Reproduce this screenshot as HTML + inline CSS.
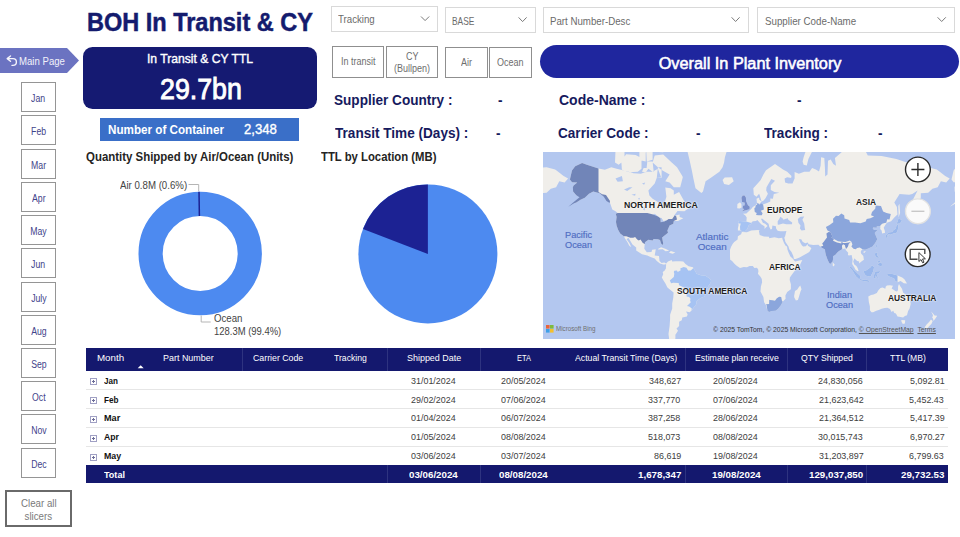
<!DOCTYPE html>
<html><head><meta charset="utf-8">
<style>
*{margin:0;padding:0;box-sizing:border-box}
html,body{width:960px;height:537px;overflow:hidden;background:#fff;font-family:"Liberation Sans",sans-serif}
.a{position:absolute}
.title{left:86.8px;top:8.1px;font-size:25px;font-weight:bold;color:#141b6e;-webkit-text-stroke:0.5px #141b6e;white-space:nowrap;transform:scaleX(0.94);transform-origin:0 0}
.mainpage{left:0;top:48px;width:79px;height:25px;background:#6b73c1;clip-path:polygon(0 0,67px 0,79px 12.5px,67px 25px,0 25px)}
.mp-text{left:19.2px;top:56px;font-size:10px;color:#f2f2fa;white-space:nowrap;transform:scaleX(0.96);transform-origin:0 0}
.mon{left:21px;width:35px;height:30px;border:1px solid #959595;color:#3f438a;font-size:10px;text-align:center;line-height:31.5px;background:#fff}
.mon span{display:inline-block;transform:scaleX(0.87)}
.clear{left:5px;top:490px;width:67px;height:37px;border:2px solid #6a6a6a;color:#7a7a7a;font-size:10.8px;text-align:center;line-height:13px;padding-top:4.5px}
.clear span{display:inline-block;transform:scaleX(0.9)}
.bigbox{left:83px;top:47px;width:234px;height:61.5px;background:#151a72;border-radius:9.5px}
.bb-t{left:147px;top:50.5px;font-size:13.2px;color:#fff;-webkit-text-stroke:0.4px #fff;white-space:nowrap;transform:scaleX(0.92);transform-origin:0 0}
.bb-v{left:160px;top:72.7px;font-size:29px;color:#fff;-webkit-text-stroke:0.9px #fff;white-space:nowrap;transform:scaleX(0.923);transform-origin:0 0}
.noc{left:100px;top:118px;width:199px;height:23px;background:#3a6fc8}
.noc-t{left:108px;top:122.1px;color:#fff;font-size:13px;font-weight:bold;white-space:nowrap;transform:scaleX(0.897);transform-origin:0 0}
.noc-v{left:244px;top:121.2px;color:#fff;font-size:14px;-webkit-text-stroke:0.35px #fff;white-space:nowrap;transform:scaleX(0.94);transform-origin:0 0}
.dd{height:26px;border:1px solid #d9d9d9;background:#fff}
.ddt{color:#6b6b6b;white-space:nowrap;transform-origin:0 0}
.btn{border:1.5px solid #8f8f8f;background:#fff}
.btt{color:#6e6e6e;font-size:10px;white-space:nowrap;transform-origin:0 0}
.pill{left:540px;top:45px;width:419px;height:33px;background:#1f269e;border-radius:17px}
.pill-t{left:658.7px;top:53.9px;color:#fff;font-size:16.3px;-webkit-text-stroke:0.55px #fff;white-space:nowrap;transform:scaleX(1);transform-origin:0 0}
.lab{color:#161a5e;font-size:14px;font-weight:bold;white-space:nowrap;transform:scaleX(0.97);transform-origin:0 0}
.dl{color:#444;font-size:10.5px;white-space:nowrap;transform-origin:0 0}
.th{background:#14186e}
.vsep{width:1px;background:#2e3380}
.hsep{height:1px;background:#e6e6e6}
.tht{color:#fff;font-size:9.5px;white-space:nowrap;transform-origin:0 0}
.td{color:#404040;font-size:9.8px;white-space:nowrap;transform-origin:0 0}
.tdb{color:#111;font-size:9.8px;font-weight:bold;white-space:nowrap;transform-origin:0 0}
.ttb{color:#fff;font-size:9.5px;font-weight:bold;white-space:nowrap;transform-origin:0 0}
.ml{font-size:8.4px;font-weight:bold;color:#1e1e1e;white-space:nowrap;text-shadow:0 0 2px #fff,0 0 2px #fff}
.ol{font-size:9.2px;-webkit-text-stroke:0.15px #4e6cc2;color:#4e6cc2;white-space:nowrap;text-align:center;line-height:10px}
.ctitle{color:#252423;font-size:12px;font-weight:bold;white-space:nowrap;transform:scaleX(0.97);transform-origin:0 0}
</style></head><body>
<div class="a title">BOH In Transit &amp; CY</div>
<div class="a mainpage"></div>
<svg class="a" style="left:4px;top:53px" width="16" height="16"><path d="M6.5,3 L3.2,5.6 L6.5,8.2 M3.4,5.6 H9 A3.4,3.4 0 0 1 9,12.4 H8" fill="none" stroke="#f4f4fb" stroke-width="1.4" stroke-linecap="round" stroke-linejoin="round"/></svg>
<div class="a mp-text">Main Page</div>

<div class="a mon" style="top:82px"><span>Jan</span></div>
<div class="a mon" style="top:115px"><span>Feb</span></div>
<div class="a mon" style="top:149px"><span>Mar</span></div>
<div class="a mon" style="top:182px"><span>Apr</span></div>
<div class="a mon" style="top:215px"><span>May</span></div>
<div class="a mon" style="top:248px"><span>Jun</span></div>
<div class="a mon" style="top:282px"><span>July</span></div>
<div class="a mon" style="top:315px"><span>Aug</span></div>
<div class="a mon" style="top:348px"><span>Sep</span></div>
<div class="a mon" style="top:381px"><span>Oct</span></div>
<div class="a mon" style="top:414px"><span>Nov</span></div>
<div class="a mon" style="top:448px"><span>Dec</span></div>
<div class="a clear"><span>Clear all</span><br><span>slicers</span></div>

<div class="a bigbox"></div>
<div class="a bb-t">In Transit &amp; CY TTL</div>
<div class="a bb-v">29.7bn</div>
<div class="a noc"></div>
<div class="a noc-t">Number of Container</div>
<div class="a noc-v">2,348</div>

<div class="a dd" style="left:331px;top:6px;width:107px"></div>
<div class="a ddt" id="dd1" style="left:338.3px;top:12.8px;font-size:11px;transform:scaleX(0.88)">Tracking</div>
<div class="a dd" style="left:445px;top:7px;width:91px"></div>
<div class="a ddt" id="dd2" style="left:452.4px;top:14.5px;font-size:10.5px;transform:scaleX(0.8)">BASE</div>
<div class="a dd" style="left:543px;top:7px;width:206px"></div>
<div class="a ddt" id="dd3" style="left:550.4px;top:14.5px;font-size:10.5px;transform:scaleX(0.923)">Part Number-Desc</div>
<div class="a dd" style="left:757px;top:7px;width:198px"></div>
<div class="a ddt" id="dd4" style="left:764.5px;top:14.5px;font-size:10.5px;transform:scaleX(0.93)">Supplier Code-Name</div>
<svg class="a" style="left:0;top:0" width="960" height="30"><path d="M421,16.5 L425.1,20.6 L429.2,16.5 M518.6,17.4 L522.6,21.6 L526.6,17.4 M731.6,17.3 L735.6,21.5 L739.6,17.3 M937.6,17.3 L941.7,21.5 L945.8,17.3" fill="none" stroke="#7a7a7a" stroke-width="1"/></svg>

<div class="a btn" style="left:332px;top:46px;width:52px;height:32px"></div>
<div class="a btn" style="left:386px;top:46px;width:52px;height:32px"></div>
<div class="a btn" style="left:445px;top:47px;width:43px;height:31px"></div>
<div class="a btn" style="left:489px;top:47px;width:43px;height:31px"></div>
<div class="a btt" id="b1" style="left:341px;top:56px;transform:scaleX(0.9)">In transit</div>
<div class="a btt" id="b2" style="left:406px;top:50.5px;transform:scaleX(0.9)">CY</div>
<div class="a btt" id="b3" style="left:393.5px;top:62.5px;transform:scaleX(0.9)">(Bullpen)</div>
<div class="a btt" id="b4" style="left:461px;top:56.5px;transform:scaleX(0.9)">Air</div>
<div class="a btt" id="b5" style="left:497px;top:56.5px;transform:scaleX(0.9)">Ocean</div>

<div class="a pill"></div>
<div class="a pill-t">Overall In Plant Inventory</div>

<div class="a lab" style="left:334px;top:91.8px">Supplier Country :</div>
<div class="a lab" style="left:498px;top:91.8px">-</div>
<div class="a lab" style="left:559px;top:91.8px;transform:scaleX(1)">Code-Name :</div>
<div class="a lab" style="left:797px;top:91.8px">-</div>
<div class="a lab" style="left:335px;top:125.3px">Transit Time (Days) :</div>
<div class="a lab" style="left:496px;top:125.3px">-</div>
<div class="a lab" style="left:558px;top:125.3px">Carrier Code :</div>
<div class="a lab" style="left:696px;top:125.3px">-</div>
<div class="a lab" style="left:764px;top:125.3px">Tracking :</div>
<div class="a lab" style="left:878px;top:125.3px">-</div>

<div class="a ctitle" style="left:86px;top:149.9px;transform:scaleX(0.953)">Quantity Shipped by Air/Ocean (Units)</div>
<div class="a ctitle" style="left:321px;top:149.9px;transform:scaleX(0.943)">TTL by Location (MB)</div>


<!-- donut -->
<svg class="a" style="left:110px;top:170px" width="190" height="170" viewBox="0 0 190 170">
<circle cx="90.2" cy="83.5" r="49.6" fill="none" stroke="#4d8af0" stroke-width="24.2"/>
<path d="M89,21.8 L89.4,46" stroke="#1c2293" stroke-width="1.5"/>
<path d="M78.5,14.5 H88.7 V21" fill="none" stroke="#b5b5b5" stroke-width="1"/>
<path d="M91.2,145.5 V152 H100.7" fill="none" stroke="#b5b5b5" stroke-width="1"/>
</svg>
<div class="a dl" style="left:119.5px;top:179px;transform:scaleX(0.92)">Air 0.8M (0.6%)</div>
<div class="a dl" style="left:214px;top:311.5px;transform:scaleX(0.92)">Ocean</div>
<div class="a dl" style="left:214px;top:324.5px;transform:scaleX(0.9)">128.3M (99.4%)</div>
<!-- pie -->
<svg class="a" style="left:350px;top:175px" width="160" height="160" viewBox="0 0 160 160">
<circle cx="77.9" cy="78.9" r="69.5" fill="#4d8af0"/>
<path d="M77.9,78.9 L77.9,9.4 A69.5,69.5 0 0 0 13,54 Z" fill="#1c2293"/>
</svg>
<!-- table -->
<div class="a th" style="left:86.2px;top:348.1px;width:862.1px;height:23px"></div>
<div class="a vsep" style="left:242.3px;top:348.1px;height:23px"></div>
<div class="a vsep" style="left:387px;top:348.1px;height:23px"></div>
<div class="a vsep" style="left:480.2px;top:348.1px;height:23px"></div>
<div class="a vsep" style="left:685.3px;top:348.1px;height:23px"></div>
<div class="a vsep" style="left:787.3px;top:348.1px;height:23px"></div>
<div class="a vsep" style="left:866.2px;top:348.1px;height:23px"></div>
<div class="a tht" style="left:96.70px;top:352.30px;transform:scaleX(1.026)">Month</div>
<div class="a tht" style="left:162.80px;top:352.30px;transform:scaleX(0.941)">Part Number</div>
<div class="a tht" style="left:253.20px;top:352.30px;transform:scaleX(0.924)">Carrier Code</div>
<div class="a tht" style="left:334.30px;top:352.30px;transform:scaleX(0.911)">Tracking</div>
<div class="a tht" style="left:406.70px;top:352.30px;transform:scaleX(0.941)">Shipped Date</div>
<div class="a tht" style="left:516.60px;top:352.30px;transform:scaleX(0.781)">ETA</div>
<div class="a tht" style="left:574.80px;top:352.30px;transform:scaleX(0.918)">Actual Transit Time (Days)</div>
<div class="a tht" style="left:694.60px;top:352.30px;transform:scaleX(0.923)">Estimate plan receive</div>
<div class="a tht" style="left:801.00px;top:352.30px;transform:scaleX(0.911)">QTY Shipped</div>
<div class="a tht" style="left:889.70px;top:352.30px;transform:scaleX(0.899)">TTL (MB)</div>
<svg class="a" style="left:137px;top:364.5px" width="8" height="4"><path d="M0.7,3.3 L3.7,0.3 L6.7,3.3Z" fill="#fff"/></svg>
<div class="a hsep" style="left:86.2px;top:389.2px;width:862.1px"></div>
<svg class="a" style="left:90px;top:378px" width="8" height="8" shape-rendering="crispEdges"><rect x="0.5" y="0.5" width="6" height="6" fill="#fff" stroke="#a0a0c4" stroke-width="1"/><rect x="2" y="3" width="3" height="1" fill="#6c6c98"/><rect x="3" y="2" width="1" height="3" fill="#6c6c98"/></svg>
<div class="a tdb" style="left:103.80px;top:374.93px;transform:scaleX(0.823)">Jan</div>
<div class="a td" style="left:411.00px;top:374.93px;transform:scaleX(0.912)">31/01/2024</div>
<div class="a td" style="left:501.00px;top:374.93px;transform:scaleX(0.912)">20/05/2024</div>
<div class="a td" style="left:649.13px;top:374.93px;transform:scaleX(0.912)">348,627</div>
<div class="a td" style="left:713.30px;top:374.93px;transform:scaleX(0.912)">20/05/2024</div>
<div class="a td" style="left:817.90px;top:374.93px;transform:scaleX(0.912)">24,830,056</div>
<div class="a td" style="left:909.55px;top:374.93px;transform:scaleX(0.912)">5,092.81</div>
<div class="a hsep" style="left:86.2px;top:407.9px;width:862.1px"></div>
<svg class="a" style="left:90px;top:397px" width="8" height="8" shape-rendering="crispEdges"><rect x="0.5" y="0.5" width="6" height="6" fill="#fff" stroke="#a0a0c4" stroke-width="1"/><rect x="2" y="3" width="3" height="1" fill="#6c6c98"/><rect x="3" y="2" width="1" height="3" fill="#6c6c98"/></svg>
<div class="a tdb" style="left:103.80px;top:393.63px;transform:scaleX(0.832)">Feb</div>
<div class="a td" style="left:411.00px;top:393.63px;transform:scaleX(0.912)">29/02/2024</div>
<div class="a td" style="left:501.00px;top:393.63px;transform:scaleX(0.912)">07/06/2024</div>
<div class="a td" style="left:648.21px;top:393.63px;transform:scaleX(0.912)">337,770</div>
<div class="a td" style="left:713.30px;top:393.63px;transform:scaleX(0.912)">07/06/2024</div>
<div class="a td" style="left:818.81px;top:393.63px;transform:scaleX(0.912)">21,623,642</div>
<div class="a td" style="left:908.63px;top:393.63px;transform:scaleX(0.912)">5,452.43</div>
<div class="a hsep" style="left:86.2px;top:426.7px;width:862.1px"></div>
<svg class="a" style="left:90px;top:416px" width="8" height="8" shape-rendering="crispEdges"><rect x="0.5" y="0.5" width="6" height="6" fill="#fff" stroke="#a0a0c4" stroke-width="1"/><rect x="2" y="3" width="3" height="1" fill="#6c6c98"/><rect x="3" y="2" width="1" height="3" fill="#6c6c98"/></svg>
<div class="a tdb" style="left:103.80px;top:412.43px;transform:scaleX(0.931)">Mar</div>
<div class="a td" style="left:411.00px;top:412.43px;transform:scaleX(0.912)">01/04/2024</div>
<div class="a td" style="left:501.00px;top:412.43px;transform:scaleX(0.912)">06/07/2024</div>
<div class="a td" style="left:648.21px;top:412.43px;transform:scaleX(0.912)">387,258</div>
<div class="a td" style="left:713.30px;top:412.43px;transform:scaleX(0.912)">28/06/2024</div>
<div class="a td" style="left:818.81px;top:412.43px;transform:scaleX(0.912)">21,364,512</div>
<div class="a td" style="left:909.55px;top:412.43px;transform:scaleX(0.912)">5,417.39</div>
<div class="a hsep" style="left:86.2px;top:445.6px;width:862.1px"></div>
<svg class="a" style="left:90px;top:435px" width="8" height="8" shape-rendering="crispEdges"><rect x="0.5" y="0.5" width="6" height="6" fill="#fff" stroke="#a0a0c4" stroke-width="1"/><rect x="2" y="3" width="3" height="1" fill="#6c6c98"/><rect x="3" y="2" width="1" height="3" fill="#6c6c98"/></svg>
<div class="a tdb" style="left:103.80px;top:431.33px;transform:scaleX(0.885)">Apr</div>
<div class="a td" style="left:411.00px;top:431.33px;transform:scaleX(0.912)">01/05/2024</div>
<div class="a td" style="left:501.00px;top:431.33px;transform:scaleX(0.912)">08/08/2024</div>
<div class="a td" style="left:648.21px;top:431.33px;transform:scaleX(0.912)">518,073</div>
<div class="a td" style="left:713.30px;top:431.33px;transform:scaleX(0.912)">08/08/2024</div>
<div class="a td" style="left:817.90px;top:431.33px;transform:scaleX(0.912)">30,015,743</div>
<div class="a td" style="left:909.55px;top:431.33px;transform:scaleX(0.912)">6,970.27</div>
<div class="a hsep" style="left:86.2px;top:464.5px;width:862.1px"></div>
<svg class="a" style="left:90px;top:454px" width="8" height="8" shape-rendering="crispEdges"><rect x="0.5" y="0.5" width="6" height="6" fill="#fff" stroke="#a0a0c4" stroke-width="1"/><rect x="2" y="3" width="3" height="1" fill="#6c6c98"/><rect x="3" y="2" width="1" height="3" fill="#6c6c98"/></svg>
<div class="a tdb" style="left:103.80px;top:450.23px;transform:scaleX(0.903)">May</div>
<div class="a td" style="left:411.00px;top:450.23px;transform:scaleX(0.912)">03/06/2024</div>
<div class="a td" style="left:501.00px;top:450.23px;transform:scaleX(0.912)">03/07/2024</div>
<div class="a td" style="left:654.09px;top:450.23px;transform:scaleX(0.912)">86,619</div>
<div class="a td" style="left:713.30px;top:450.23px;transform:scaleX(0.912)">19/08/2024</div>
<div class="a td" style="left:818.81px;top:450.23px;transform:scaleX(0.912)">31,203,897</div>
<div class="a td" style="left:908.63px;top:450.23px;transform:scaleX(0.912)">6,799.63</div>
<div class="a th" style="left:86.2px;top:465.2px;width:862.1px;height:17.8px"></div>
<div class="a vsep" style="left:387px;top:465.2px;height:17.8px"></div>
<div class="a vsep" style="left:480.2px;top:465.2px;height:17.8px"></div>
<div class="a vsep" style="left:685.3px;top:465.2px;height:17.8px"></div>
<div class="a vsep" style="left:787.3px;top:465.2px;height:17.8px"></div>
<div class="a vsep" style="left:866.2px;top:465.2px;height:17.8px"></div>
<div class="a ttb" style="left:104.00px;top:469.10px;transform:scaleX(0.951)">Total</div>
<div class="a ttb" style="left:408.85px;top:469.10px;transform:scaleX(1.026)">03/06/2024</div>
<div class="a ttb" style="left:498.75px;top:469.10px;transform:scaleX(1.026)">08/08/2024</div>
<div class="a ttb" style="left:637.94px;top:469.10px;transform:scaleX(1.026)">1,678,347</div>
<div class="a ttb" style="left:711.75px;top:469.10px;transform:scaleX(1.026)">19/08/2024</div>
<div class="a ttb" style="left:809.21px;top:469.10px;transform:scaleX(1.026)">129,037,850</div>
<div class="a ttb" style="left:900.84px;top:469.10px;transform:scaleX(1.026)">29,732.53</div>

<!--MAP-->
<svg class="a" style="left:543px;top:152px" width="412" height="187" viewBox="0 0 412 187">
<rect width="412" height="187" fill="#b3c7ef"/>
<path d="M55.5,16.5L61.9,17.7L68.3,15.3L73.6,16.8L83.1,18.9L90.5,21.2L97.9,21.7L103.2,19.7L105.4,16.8L109.6,19.7L114.9,16.8L118.1,25.3L113.8,25.8L111.7,31.6L105.4,38.5L106.4,43.4L109.6,46.7L114.9,50.0L117.8,54.3L120.2,57.1L121.3,51.5L123.4,44.8L122.3,35.6L127.6,36.3L130.8,38.5L130.8,42.7L136.1,40.0L139.3,45.8L141.4,49.6L145.6,54.1L146.0,55.9L141.4,59.3L134.5,58.9L130.8,64.0L136.6,62.5L136.6,65.1L140.3,66.3L135.0,69.0L130.8,69.0L130.3,71.8L126.6,73.6L124.4,78.4L125.0,80.7L119.1,85.4L120.2,91.5L119.7,93.0L118.1,91.5L117.0,87.9L114.9,87.3L110.7,87.0L109.6,88.5L105.4,87.7L101.9,90.3L101.6,93.2L101.3,96.7L103.8,100.3L108.5,100.1L109.1,97.8L112.8,97.3L111.7,103.4L116.0,104.0L116.5,108.9L118.6,111.0L121.3,110.5L123.1,111.6L122.3,112.6L120.2,112.6L117.0,111.6L113.8,108.9L111.7,106.4L107.5,105.1L104.3,103.4L99.0,102.3L93.2,98.4L93.2,95.6L89.5,92.6L85.4,85.7L83.6,87.3L86.3,90.9L88.4,95.3L86.3,93.8L84.2,89.7L82.0,86.6L80.9,84.2L77.2,81.6L75.1,77.7L73.6,73.6L73.0,70.0L73.6,65.1L72.8,61.8L74.6,60.9L72.5,59.3L69.3,57.6L67.2,51.5L64.0,46.7L59.8,43.8L56.6,41.3L50.2,39.6L46.0,41.7L41.8,45.8L37.5,47.7L33.3,50.5L31.2,51.5L37.5,44.8L33.3,43.2L30.1,39.6L30.1,35.2L30.6,33.5L34.3,30.4L29.0,30.2L26.9,27.6L29.0,18.6L32.2,14.3L39.1,11.1L43.9,12.7ZM139.8,25.3L137.2,35.2L130.8,35.2L126.6,30.4L122.3,29.2L126.6,22.6L119.1,18.3L114.9,15.3L109.6,10.4L111.7,3.4L120.2,2.6L128.7,10.4L134.0,15.3L139.3,23.9ZM78.9,17.7L86.3,20.3L94.8,19.7L98.5,16.8L98.5,5.9L92.6,3.0L83.1,2.3L78.3,9.4ZM72.0,10.4L75.7,12.7L81.5,8.1L81.5,-1.7L72.5,-1.7ZM107.5,-0.5L120.2,0.3L122.3,-6.7L104.3,-11.2L99.0,-6.7ZM79.9,-4.6L93.7,-2.5L102.2,1.5L105.4,-3.3L99.0,-11.2L83.1,-11.2ZM103.8,9.4L109.6,7.7L109.6,-1.7L103.2,-1.7ZM96.4,8.1L102.7,9.4L102.7,-1.7L96.4,-1.7ZM99.0,19.7L103.2,20.3L103.8,15.9L100.6,15.9ZM103.2,19.7L110.7,19.7L109.6,9.4L104.3,9.4ZM113.8,25.8L118.6,25.8L118.6,15.3L114.9,15.3ZM127.6,-16.1L135.0,-6.7L143.5,-4.6L146.7,8.7L148.8,18.3L150.4,26.6L152.5,36.3L158.4,41.1L160.0,39.6L162.6,29.2L167.9,25.8L176.4,19.7L179.6,15.3L181.1,10.4L181.9,5.2L184.3,-2.5L185.9,-16.1L173.2,-27.3L141.4,-27.3ZM179.6,27.9L181.7,25.6L189.1,25.3L190.7,29.2L185.9,33.1L181.1,32.1ZM123.1,111.6L125.0,109.4L128.7,108.0L129.2,109.4L132.9,109.3L137.2,109.2L140.3,109.4L142.5,112.1L145.6,114.2L149.9,115.3L152.0,118.7L153.6,121.7L157.8,123.2L162.6,123.8L165.8,125.9L167.9,128.0L167.9,130.2L165.8,133.4L163.7,136.7L163.1,140.0L161.5,144.5L157.8,145.9L153.6,149.1L153.4,152.1L150.9,155.2L148.8,158.3L146.7,160.2L143.0,159.6L144.6,162.2L144.0,164.5L139.3,165.5L138.8,168.3L136.1,169.7L136.1,174.1L133.5,176.4L135.0,178.7L132.4,182.8L132.4,185.8L131.9,190.7L126.6,190.7L125.5,181.9L126.6,174.1L127.1,166.9L127.1,162.8L129.2,156.4L129.2,151.5L130.3,145.6L130.6,140.5L128.7,138.9L124.4,135.6L122.3,131.2L120.2,128.0L118.8,125.4L120.2,122.2L119.7,120.1L121.5,118.7L122.9,116.4L123.1,113.2ZM194.9,78.4L195.6,78.4L198.1,78.6L199.2,79.7L202.7,78.8L204.5,76.7L205.0,75.0L206.0,72.9L208.5,71.8L208.3,70.8L209.8,69.3L213.0,68.9L214.3,68.0L216.1,70.0L218.2,72.2L221.5,74.3L221.6,77.0L222.6,75.8L224.6,74.0L222.2,71.8L219.8,70.8L218.0,66.8L219.5,66.8L221.5,68.6L225.6,71.8L226.2,74.8L227.6,77.4L229.0,77.0L229.4,73.6L232.9,74.3L233.1,76.6L234.7,78.8L237.3,79.3L241.0,79.3L243.4,78.9L243.1,80.3L242.1,84.2L241.3,85.7L242.0,87.9L242.3,89.7L245.5,94.4L246.3,97.3L248.5,100.1L250.3,104.0L250.9,107.0L252.7,106.9L256.6,105.6L260.1,103.6L263.3,101.8L266.3,100.1L268.4,96.2L267.0,94.9L264.9,93.8L264.7,92.1L262.8,94.2L260.1,94.4L258.8,93.2L257.5,90.9L255.9,87.3L258.2,87.3L259.6,89.8L262.2,91.2L264.7,90.6L265.7,92.3L270.3,93.0L275.5,92.8L277.3,94.7L279.3,96.1L282.0,97.5L282.2,100.1L282.9,102.9L284.3,106.9L285.9,110.5L287.1,112.0L289.6,109.6L290.1,106.7L290.0,104.3L292.1,102.9L295.1,99.8L297.2,98.2L299.0,97.2L300.9,96.7L302.3,96.5L302.9,98.2L305.2,100.7L304.9,102.9L306.0,103.6L308.6,102.9L309.6,107.8L309.4,109.4L309.2,111.9L311.3,115.3L312.4,117.6L314.7,119.2L315.6,119.0L314.6,116.1L313.4,114.0L311.3,112.6L310.2,109.4L311.5,106.2L312.0,107.0L314.2,108.9L316.1,109.4L316.1,111.5L318.4,109.4L320.9,107.8L320.3,104.0L317.9,101.2L317.9,99.0L319.5,97.3L322.1,97.8L325.3,96.4L329.5,94.4L332.2,90.9L334.3,87.3L333.3,84.8L331.7,81.0L332.7,79.7L334.9,77.8L331.1,78.1L329.8,76.6L330.1,75.4L333.8,75.7L333.8,74.3L337.5,74.3L337.2,77.0L338.6,78.4L339.1,81.6L342.1,80.7L341.7,78.4L340.7,75.7L342.3,72.9L343.9,70.8L348.1,69.3L351.3,65.6L354.5,62.5L353.9,55.0L351.3,50.5L356.6,42.1L366.1,42.7L369.3,42.1L374.6,38.5L370.4,46.7L370.9,57.6L376.7,48.7L377.8,45.4L377.8,41.3L385.2,40.7L389.4,36.7L394.7,35.2L397.9,29.2L403.2,30.4L406.7,26.6L402.2,23.9L395.8,18.9L393.7,17.4L385.2,15.3L374.6,16.2L364.0,10.4L353.4,7.0L338.6,4.1L324.8,3.4L315.2,-14.6L305.7,-6.7L297.2,1.5L291.9,5.9L293.0,13.7L290.3,12.1L287.7,7.4L285.0,8.7L284.5,22.6L282.2,24.5L281.9,15.3L281.3,5.9L278.1,5.2L277.6,13.7L276.0,19.5L272.8,17.4L269.1,15.9L266.5,19.7L261.2,19.7L255.9,21.7L251.6,20.0L251.6,26.6L245.3,30.4L247.4,29.2L248.5,23.9L244.2,19.7L240.0,17.4L236.8,15.3L232.0,12.1L227.3,15.3L223.0,18.3L220.4,22.6L217.7,27.9L213.5,32.8L210.3,36.3L210.8,42.7L213.5,44.8L216.1,41.7L216.7,43.2L218.6,49.6L216.4,47.7L216.1,45.4L213.5,46.7L214.0,51.5L212.4,53.3L209.8,55.0L208.2,57.1L206.6,58.4L203.4,61.4L200.0,61.8L202.4,63.6L203.7,65.6L203.4,69.5L196.5,69.0L195.1,70.0L195.6,72.9L194.9,76.3ZM187.0,97.8L187.0,104.9L187.2,107.8L189.1,109.1L191.2,111.6L193.3,113.4L197.0,115.9L200.8,115.1L203.9,115.3L206.6,114.0L209.8,113.9L211.4,116.0L214.0,115.8L215.2,117.4L215.4,119.5L214.9,121.7L217.5,124.8L218.8,127.0L219.1,130.2L217.9,134.5L217.5,139.4L220.4,145.1L221.1,150.3L223.0,153.3L224.5,158.9L226.2,160.0L228.9,158.9L232.6,158.7L235.2,156.7L237.9,153.3L239.7,149.7L242.6,146.8L242.4,143.4L244.2,140.0L247.9,137.2L247.9,132.3L246.7,128.0L246.9,125.4L249.0,122.4L251.6,119.0L255.9,115.3L259.3,108.0L256.4,108.6L252.2,109.5L250.8,108.3L250.4,107.3L247.4,104.5L245.8,101.0L244.5,97.8L244.0,94.4L242.6,93.8L241.0,90.9L240.5,89.7L239.5,87.3L239.2,85.8L235.7,86.2L231.5,85.3L226.2,86.3L226.0,84.8L220.9,84.4L216.7,82.9L215.9,79.0L216.8,78.4L215.1,78.0L208.2,78.6L203.9,80.3L198.9,79.9L198.1,82.3L194.9,84.2L194.6,87.6L191.2,90.0L189.6,92.1L188.0,95.0ZM257.3,133.4L258.5,137.2L257.5,139.4L255.9,145.1L254.9,147.9L252.9,148.6L251.3,145.6L251.1,143.9L252.0,138.9L254.3,137.4L255.9,135.0ZM325.3,144.5L325.8,149.7L326.9,154.6L326.9,158.3L328.5,160.2L330.1,160.2L333.3,158.7L336.4,157.7L338.6,156.8L341.7,156.0L344.4,155.8L347.0,157.0L348.6,160.0L350.2,158.7L351.3,161.0L352.9,161.5L354.5,164.6L357.6,164.9L360.1,165.5L361.9,163.9L364.0,163.2L365.1,158.9L366.6,156.4L367.7,152.1L367.2,148.0L364.8,145.1L362.9,142.8L360.1,140.5L359.0,136.7L357.1,133.9L356.0,132.0L355.1,134.3L355.0,138.3L353.9,139.5L352.3,138.9L350.2,137.6L348.6,136.5L350.0,133.7L347.0,133.3L343.9,133.6L342.8,134.5L342.3,136.7L339.6,135.6L337.5,136.1L335.4,138.3L333.8,141.1L330.6,142.6L328.0,143.1L325.8,144.3ZM358.3,168.0L362.2,168.2L361.9,171.4L359.8,172.0L358.5,169.7ZM388.1,159.6L390.0,161.5L391.6,163.6L394.2,163.8L392.6,166.2L390.5,169.0L390.0,166.6L389.2,165.8L390.0,163.2ZM388.0,167.6L389.7,169.0L388.4,171.9L386.3,174.1L384.1,176.5L381.5,175.6L383.6,172.6L386.3,169.7ZM343.9,122.2L347.0,121.4L350.2,122.2L354.5,123.4L359.2,125.5L361.4,127.2L364.0,131.5L360.8,131.2L357.6,129.1L354.5,130.3L352.3,129.1L351.1,126.4L348.1,125.2L345.5,124.3ZM320.5,119.0L321.6,122.2L323.2,123.8L326.4,124.6L328.0,124.3L328.5,122.7L330.1,119.5L331.1,115.3L329.0,113.2L327.3,115.4L324.8,117.2L322.7,118.7ZM306.0,114.7L308.4,115.1L311.5,118.5L314.9,121.7L317.4,123.9L317.1,126.8L315.8,126.9L313.1,124.6L311.3,121.7L309.6,118.8ZM316.5,127.8L317.4,126.9L320.0,127.7L322.7,127.5L326.4,128.8L326.3,129.9L321.6,129.2L317.9,128.5ZM331.1,126.4L332.7,126.4L332.5,123.2L333.8,125.4L335.6,126.2L334.3,124.0L333.6,121.7L335.4,121.6L337.5,119.0L332.7,119.5L331.9,120.6L330.9,123.6ZM332.2,100.7L334.6,100.7L334.3,103.4L336.4,105.8L333.8,105.8L332.7,105.1L332.0,102.9ZM334.3,113.2L335.9,111.3L338.6,110.5L339.1,113.2L338.0,114.4L336.4,113.7ZM334.3,110.0L336.4,108.3L338.0,108.9L336.4,110.2L335.4,110.8ZM343.8,82.3L345.5,80.5L349.2,80.1L350.2,78.4L352.9,76.6L353.4,73.6L355.0,72.5L355.5,75.0L354.2,79.7L353.2,81.0L350.2,81.5L348.3,82.5L346.0,82.0L344.4,82.9ZM353.4,72.2L354.5,69.8L355.5,66.5L359.0,68.1L357.1,71.5L354.5,71.8ZM342.5,83.3L344.4,82.6L344.7,85.4L343.3,85.9ZM345.5,83.5L347.7,82.3L347.6,83.1L346.0,83.9ZM332.3,95.6L333.3,93.0L334.3,93.2L333.0,96.7ZM289.6,110.2L291.7,112.6L290.9,114.2L289.8,114.0ZM199.0,59.3L206.5,57.2L206.8,54.7L205.0,53.3L203.1,49.0L202.9,45.4L201.6,43.6L199.7,43.6L198.4,45.8L199.1,50.0L201.8,50.7L201.5,53.4L200.1,53.6L199.5,56.4L201.3,56.9ZM198.6,55.5L198.4,52.0L197.0,50.2L194.4,52.0L194.2,56.2L196.5,56.6ZM114.9,96.9L118.1,95.3L122.9,96.9L126.3,98.7L122.6,99.2L119.7,97.2L115.4,97.5ZM126.0,100.8L127.8,99.1L132.4,100.5L129.7,101.7ZM260.6,12.7L263.8,13.4L265.4,7.0L270.7,-3.7L278.1,-10.3L268.6,-8.9L263.3,-2.5L260.6,5.2L259.6,9.4ZM355.5,65.6L357.1,60.9L356.4,51.8L355.3,54.1L355.5,60.9ZM217.7,-16.1L226.2,-11.2L231.5,-16.1L224.1,-27.3L215.6,-24.3ZM320.1,99.9L322.1,98.9L322.7,99.4L321.2,101.0ZM-186.7,78.4L-186.0,78.4L-183.5,78.6L-182.4,79.7L-178.9,78.8L-177.1,76.7L-176.6,75.0L-175.6,72.9L-173.1,71.8L-173.3,70.8L-171.8,69.3L-168.7,68.9L-167.3,68.0L-165.5,70.0L-163.4,72.2L-160.1,74.3L-160.0,77.0L-159.0,75.8L-157.0,74.0L-159.4,71.8L-161.8,70.8L-163.6,66.8L-162.1,66.8L-160.1,68.6L-156.0,71.8L-155.4,74.8L-154.0,77.4L-152.6,77.0L-152.2,73.6L-148.7,74.3L-148.5,76.6L-146.9,78.8L-144.3,79.3L-140.6,79.3L-138.2,78.9L-138.5,80.3L-139.5,84.2L-140.3,85.7L-139.6,87.9L-139.3,89.7L-136.1,94.4L-135.3,97.3L-133.1,100.1L-131.3,104.0L-130.7,107.0L-128.9,106.9L-125.0,105.6L-121.5,103.6L-118.3,101.8L-115.3,100.1L-113.2,96.2L-114.6,94.9L-116.7,93.8L-116.9,92.1L-118.8,94.2L-121.5,94.4L-122.8,93.2L-124.1,90.9L-125.7,87.3L-123.4,87.3L-122.0,89.8L-119.4,91.2L-116.9,90.6L-115.9,92.3L-111.3,93.0L-106.1,92.8L-104.3,94.7L-102.3,96.1L-99.6,97.5L-99.4,100.1L-98.7,102.9L-97.3,106.9L-95.7,110.5L-94.4,112.0L-92.0,109.6L-91.5,106.7L-91.6,104.3L-89.5,102.9L-86.5,99.8L-84.4,98.2L-82.6,97.2L-80.7,96.7L-79.3,96.5L-78.7,98.2L-76.4,100.7L-76.7,102.9L-75.6,103.6L-73.0,102.9L-72.0,107.8L-72.2,109.4L-72.4,111.9L-70.3,115.3L-69.2,117.6L-66.9,119.2L-66.0,119.0L-67.0,116.1L-68.2,114.0L-70.3,112.6L-71.4,109.4L-70.1,106.2L-69.6,107.0L-67.4,108.9L-65.5,109.4L-65.5,111.5L-63.2,109.4L-60.7,107.8L-61.3,104.0L-63.7,101.2L-63.7,99.0L-62.1,97.3L-59.5,97.8L-56.3,96.4L-52.1,94.4L-49.4,90.9L-47.3,87.3L-48.3,84.8L-49.9,81.0L-48.9,79.7L-46.8,77.8L-50.5,78.1L-51.8,76.6L-51.5,75.4L-47.8,75.7L-47.8,74.3L-44.1,74.3L-44.4,77.0L-43.0,78.4L-42.5,81.6L-39.5,80.7L-39.9,78.4L-40.9,75.7L-39.3,72.9L-37.7,70.8L-33.5,69.3L-30.3,65.6L-27.1,62.5L-27.7,55.0L-30.3,50.5L-25.0,42.1L-15.5,42.7L-12.3,42.1L-7.0,38.5L-11.2,46.7L-10.7,57.6L-4.9,48.7L-3.8,45.4L-3.8,41.3L3.6,40.7L7.8,36.7L13.1,35.2L16.3,29.2L21.6,30.4L25.1,26.6L20.6,23.9L14.2,18.9L12.1,17.4L3.6,15.3L-7.0,16.2L-17.6,10.4L-28.2,7.0L-43.0,4.1L-56.8,3.4L-66.4,-14.6L-75.9,-6.7L-84.4,1.5L-89.7,5.9L-88.6,13.7L-91.3,12.1L-93.9,7.4L-96.6,8.7L-97.1,22.6L-99.4,24.5L-99.8,15.3L-100.3,5.9L-103.5,5.2L-104.0,13.7L-105.6,19.5L-108.8,17.4L-112.5,15.9L-115.1,19.7L-120.4,19.7L-125.7,21.7L-130.0,20.0L-130.0,26.6L-136.3,30.4L-134.2,29.2L-133.1,23.9L-137.4,19.7L-141.6,17.4L-144.8,15.3L-149.6,12.1L-154.3,15.3L-158.6,18.3L-161.2,22.6L-163.9,27.9L-168.1,32.8L-171.3,36.3L-170.8,42.7L-168.1,44.8L-165.5,41.7L-164.9,43.2L-163.0,49.6L-165.2,47.7L-165.5,45.4L-168.1,46.7L-167.6,51.5L-169.2,53.3L-171.8,55.0L-173.4,57.1L-175.0,58.4L-178.2,61.4L-181.6,61.8L-179.2,63.6L-177.9,65.6L-178.2,69.5L-185.1,69.0L-186.5,70.0L-186.0,72.9L-186.7,76.3ZM437.1,16.5L443.5,17.7L449.9,15.3L455.2,16.8L464.7,18.9L472.1,21.2L479.5,21.7L484.8,19.7L487.0,16.8L491.2,19.7L496.5,16.8L499.7,25.3L495.4,25.8L493.3,31.6L487.0,38.5L488.0,43.4L491.2,46.7L496.5,50.0L499.4,54.3L501.8,57.1L502.9,51.5L505.0,44.8L503.9,35.6L509.2,36.3L512.4,38.5L512.4,42.7L517.7,40.0L520.9,45.8L523.0,49.6L527.2,54.1L527.6,55.9L523.0,59.3L516.1,58.9L512.4,64.0L518.2,62.5L518.2,65.1L521.9,66.3L516.6,69.0L512.4,69.0L511.9,71.8L508.2,73.6L506.0,78.4L506.6,80.7L500.7,85.4L501.8,91.5L501.3,93.0L499.7,91.5L498.6,87.9L496.5,87.3L492.3,87.0L491.2,88.5L487.0,87.7L483.5,90.3L483.2,93.2L482.9,96.7L485.4,100.3L490.1,100.1L490.7,97.8L494.4,97.3L493.3,103.4L497.6,104.0L498.1,108.9L500.2,111.0L502.9,110.5L504.7,111.6L503.9,112.6L501.8,112.6L498.6,111.6L495.4,108.9L493.3,106.4L489.1,105.1L485.9,103.4L480.6,102.3L474.8,98.4L474.8,95.6L471.1,92.6L467.0,85.7L465.2,87.3L467.9,90.9L470.0,95.3L467.9,93.8L465.8,89.7L463.6,86.6L462.5,84.2L458.8,81.6L456.8,77.7L455.2,73.6L454.6,70.0L455.2,65.1L454.4,61.8L456.2,60.9L454.1,59.3L450.9,57.6L448.8,51.5L445.6,46.7L441.4,43.8L438.2,41.3L431.8,39.6L427.6,41.7L423.4,45.8L419.1,47.7L414.9,50.5L412.8,51.5L419.1,44.8L414.9,43.2L411.7,39.6L411.7,35.2L412.2,33.5L415.9,30.4L410.6,30.2L408.5,27.6L410.6,18.6L413.8,14.3L420.7,11.1L425.5,12.7ZM437.1,16.5L437.1,40.0L440.9,42.3L444.6,43.0L448.6,48.9L448.3,50.9L445.1,49.0L442.4,44.8L438.2,41.3L431.8,39.6L427.6,41.7L423.4,45.8L419.1,47.7L414.9,50.5L412.2,51.6L406.9,54.8L411.2,50.9L418.1,45.2L414.9,43.2L411.7,39.6L411.5,35.2L412.2,33.5L415.9,30.4L410.6,30.2L408.5,27.6L410.6,18.6L413.8,14.3L420.7,11.1L425.5,12.7Z" fill="#f0eeea"/>
<path d="M216.4,52.0L217.9,52.0L219.8,52.5L224.1,50.9L227.3,49.6L227.3,46.4L229.9,46.7L230.8,41.9L236.3,40.7L231.5,40.0L227.8,38.1L227.8,33.3L232.0,28.7L228.3,27.1L223.5,35.2L223.2,38.5L224.9,41.7L222.5,46.2L220.4,48.7L218.6,49.6ZM234.7,72.6L235.7,72.8L240.0,71.5L243.2,72.2L249.0,72.2L249.2,70.5L245.3,67.8L244.8,66.3L242.1,67.1L240.5,67.8L239.5,66.3L237.3,64.8L236.4,66.8L234.7,69.3ZM254.8,67.1L257.5,64.8L261.2,64.4L259.4,67.8L261.2,71.5L261.7,75.7L262.2,78.0L258.5,78.4L256.9,76.5L257.5,73.6L255.4,70.8ZM241.6,26.6L244.2,25.3L248.5,26.1L251.6,26.6L249.5,31.6L245.3,31.6L242.1,30.4ZM107.5,64.4L111.7,61.7L115.4,64.8L112.8,66.3L111.9,71.5L113.3,71.5L115.1,65.9L117.5,66.6L117.7,70.2L121.3,69.6L123.9,68.3L120.4,68.9L118.6,65.9L116.0,65.6L111.7,64.8ZM72.5,26.6L78.9,23.9L79.9,29.2L74.6,29.7ZM81.0,37.4L86.3,35.2L89.5,35.2L84.2,38.9ZM100.1,57.6L102.7,52.4L101.6,58.4ZM88.4,42.7L92.6,41.7L92.1,43.8ZM94.8,46.7L96.9,45.8L96.4,47.7ZM99.0,31.6L102.2,30.4L101.1,32.8Z" fill="#b3c7ef"/>
<path d="M72.8,61.8L74.6,60.9L104.3,60.9L110.1,62.5L115.4,64.8L117.5,66.6L117.7,70.2L121.3,69.6L123.9,68.3L125.6,67.1L129.2,67.1L131.6,63.4L133.1,64.0L134.0,67.4L130.8,69.0L130.3,71.8L126.6,73.6L124.4,78.4L125.0,80.7L119.1,85.4L120.2,91.5L119.7,93.0L118.1,91.5L117.0,87.9L114.9,87.3L110.7,87.0L109.6,88.5L105.4,87.7L101.9,90.3L102.0,92.1L99.8,91.1L97.5,87.5L95.8,88.5L94.2,87.6L92.1,85.0L90.3,85.7L87.3,85.7L83.3,84.2L80.9,84.2L77.2,81.6L75.1,77.7L73.6,73.6L73.0,70.0L73.6,65.1ZM55.5,16.5L55.5,40.0L59.2,42.3L63.0,43.0L67.0,48.9L66.7,50.9L63.5,49.0L60.8,44.8L56.6,41.3L50.2,39.6L46.0,41.7L41.8,45.8L37.5,47.7L33.3,50.5L30.6,51.6L25.3,54.8L29.6,50.9L36.5,45.2L33.3,43.2L30.1,39.6L29.9,35.2L30.6,33.5L34.3,30.4L29.0,30.2L26.9,27.6L29.0,18.6L32.2,14.3L39.1,11.1L43.9,12.7Z" fill="#7185b8"/>
<path d="M150.4,116.1L152.0,118.7L153.6,121.7L157.8,123.2L162.6,123.8L165.8,125.9L167.9,128.0L167.9,130.2L165.8,133.4L163.7,136.7L163.1,140.0L161.5,144.5L157.8,145.9L153.6,149.1L153.4,152.1L150.9,155.2L148.4,158.6L148.8,156.4L146.2,154.6L144.0,153.9L147.8,150.3L147.1,148.7L147.5,146.8L146.2,145.1L143.7,144.5L143.5,142.2L144.0,139.4L141.4,138.1L140.9,135.4L138.8,134.5L136.1,133.2L135.7,131.0L130.2,130.8L128.1,131.2L126.8,128.6L130.8,125.1L131.3,121.7L130.8,120.1L131.3,118.7L134.0,118.5L134.7,119.9L137.7,118.3L137.2,116.4L140.7,115.1L143.5,115.8L145.1,118.5L147.8,118.4ZM195.1,70.0L196.5,68.9L203.1,69.5L208.4,70.9L208.5,71.8L206.0,72.9L205.0,75.0L204.5,76.7L202.7,78.8L199.2,79.7L198.1,78.6L197.2,78.1L197.0,74.8L197.7,71.6L195.6,71.6Z" fill="#a6c3f3"/>
<path d="M199.0,59.3L206.5,57.2L206.8,54.7L205.0,53.3L203.1,49.0L202.9,45.4L201.6,43.6L199.7,43.6L198.4,45.8L199.1,50.0L201.8,50.7L201.5,53.4L200.1,53.6L199.5,56.4L201.3,56.9Z" fill="#7a8fca"/>
<path d="M211.5,57.9L211.4,56.1L212.4,55.5L212.6,53.6L214.1,52.5L214.4,50.7L216.7,52.4L218.2,51.5L220.1,52.5L220.5,54.8L220.9,57.4L217.8,58.8L219.6,61.2L218.8,63.3L215.6,63.3L213.1,63.1L213.7,60.9L211.8,60.1ZM282.9,75.0L284.5,78.4L287.7,80.3L289.3,84.2L288.4,85.4L290.9,87.0L295.1,89.2L298.8,89.8L302.5,89.9L306.8,88.5L308.4,89.7L309.4,92.6L308.4,94.4L310.5,96.7L312.6,97.3L314.2,95.9L316.8,95.6L319.5,97.2L322.1,97.8L325.3,96.4L329.5,94.4L332.2,90.9L334.3,87.3L333.3,84.8L331.7,81.0L332.7,79.7L334.9,77.8L331.1,78.1L329.8,76.6L330.1,75.4L333.8,75.7L333.8,74.3L336.8,74.3L339.1,71.8L341.7,70.9L343.3,70.8L344.2,67.3L346.5,67.4L347.8,62.0L343.5,61.0L340.1,59.6L338.0,54.1L332.7,53.6L332.2,56.7L329.0,59.9L328.0,63.3L331.1,64.4L327.4,66.3L323.7,67.1L322.7,69.5L317.4,71.2L312.1,70.5L307.1,70.5L306.2,68.1L301.5,66.5L301.2,63.3L298.3,61.4L295.6,64.0L293.0,63.7L290.0,66.8L290.3,70.2L286.6,72.9ZM222.5,152.2L223.5,152.7L224.5,158.9L226.2,160.0L228.9,158.9L232.6,158.7L235.2,156.7L237.9,153.3L239.7,149.7L238.9,148.6L238.2,145.0L236.1,144.7L233.6,146.6L232.0,148.7L229.4,148.3L227.0,148.0L226.2,147.7L226.1,152.0Z" fill="#8ba6dc"/>
<path d="M277.3,94.7L280.3,93.8L279.2,91.5L280.8,89.7L282.4,87.5L284.0,85.4L283.4,81.6L285.6,79.9L287.7,80.3L289.3,84.2L288.4,85.4L290.9,87.0L290.0,88.8L294.0,90.4L298.3,91.5L298.5,89.8L300.2,91.1L302.5,91.0L306.0,90.6L307.8,89.7L305.7,92.1L305.0,94.4L303.6,96.5L303.0,96.7L302.3,95.0L302.0,93.2L300.2,92.3L298.9,93.8L299.3,96.7L299.0,97.2L297.2,98.2L295.1,99.8L292.1,102.9L290.0,104.3L290.1,106.7L289.6,109.6L287.1,112.0L285.9,110.5L284.3,106.9L282.9,102.9L282.2,100.1L282.0,97.5L279.3,96.1Z" fill="#7c96d0"/>
<path d="M343.8,82.3L345.5,80.5L349.2,80.1L350.2,78.4L352.9,76.6L353.4,73.6L355.0,72.5L355.5,75.0L354.2,79.7L353.2,81.0L350.2,81.5L348.3,82.5L346.0,82.0L344.4,82.9ZM353.4,72.2L354.5,69.8L355.5,66.5L359.0,68.1L357.1,71.5L354.5,71.8ZM342.5,83.3L344.4,82.6L344.7,85.4L343.3,85.9ZM345.5,83.5L347.7,82.3L347.6,83.1L346.0,83.9ZM306.0,114.7L308.4,115.1L311.5,118.5L314.9,121.7L317.4,123.9L317.1,126.8L315.8,126.9L313.1,124.6L311.3,121.7L309.6,118.8ZM320.5,119.0L321.6,122.2L323.2,123.8L326.4,124.6L328.0,124.3L328.5,122.7L330.1,119.5L331.1,115.3L329.0,113.2L327.3,115.4L324.8,117.2L322.7,118.7ZM316.5,127.8L317.4,126.9L320.0,127.7L322.7,127.5L326.4,128.8L326.3,129.9L321.6,129.2L317.9,128.5ZM331.1,126.4L332.7,126.4L332.5,123.2L333.8,125.4L335.6,126.2L334.3,124.0L333.6,121.7L335.4,121.6L337.5,119.0L332.7,119.5L331.9,120.6L330.9,123.6ZM332.2,100.7L334.6,100.7L334.3,103.4L336.4,105.8L333.8,105.8L332.7,105.1L332.0,102.9ZM334.3,113.2L335.9,111.3L338.6,110.5L339.1,113.2L338.0,114.4L336.4,113.7ZM334.3,110.0L336.4,108.3L338.0,108.9L336.4,110.2L335.4,110.8ZM332.3,95.6L333.3,93.0L334.3,93.2L333.0,96.7ZM343.9,122.2L347.0,121.4L350.2,122.2L354.5,123.4L354.5,130.3L352.3,129.1L351.1,126.4L348.1,125.2L345.5,124.3Z" fill="#9ab8ec"/>

</svg>
<!--/MAP-->
<!--MAPLABELS-->
<div class="a ml" style="left:624px;top:200px;transform:scaleX(1.04);transform-origin:0 0">NORTH AMERICA</div>
<div class="a ml" style="left:767px;top:205px">EUROPE</div>
<div class="a ml" style="left:856px;top:197px">ASIA</div>
<div class="a ml" style="left:769px;top:262px">AFRICA</div>
<div class="a ml" style="left:677px;top:286px">SOUTH AMERICA</div>
<div class="a ml" style="left:888px;top:293px">AUSTRALIA</div>
<div class="a ol" style="left:565px;top:230px">Pacific<br>Ocean</div>
<div class="a ol" style="left:696px;top:232px;font-size:9.9px">Atlantic<br>Ocean</div>
<div class="a ol" style="left:826px;top:290px">Indian<br>Ocean</div>
<svg class="a" style="left:546px;top:325px" width="8" height="8"><rect x="0" y="0" width="3.6" height="3.6" fill="#e8643c"/><rect x="4" y="0" width="3.6" height="3.6" fill="#7fba3e"/><rect x="0" y="4" width="3.6" height="3.6" fill="#3fa0e8"/><rect x="4" y="4" width="3.6" height="3.6" fill="#f5c02c"/></svg>
<div class="a" style="left:556px;top:324px;font-size:7.5px;color:#707070;white-space:nowrap;transform:scaleX(0.83);transform-origin:0 0">Microsoft Bing</div>
<div class="a" style="left:713px;top:325px;font-size:7.2px;color:#333;white-space:nowrap;transform:scaleX(0.945);transform-origin:0 0">&copy; 2025 TomTom, &copy; 2025 Microsoft Corporation, <span style="text-decoration:underline;color:#555">&copy; OpenStreetMap</span>&nbsp;&nbsp;<span style="text-decoration:underline;color:#555">Terms</span></div>
<svg class="a" style="left:903px;top:155px" width="30" height="115" viewBox="0 0 30 115">
<circle cx="14.9" cy="14.5" r="12.4" fill="#fff" stroke="#2a2a2a" stroke-width="1.4"/>
<path d="M8.4,14.5H21.4M14.9,8V21" stroke="#2a2a2a" stroke-width="1.4"/>
<circle cx="14.9" cy="56.3" r="12.4" fill="#fafafa" stroke="#e2e2e2" stroke-width="1.4"/>
<path d="M8.4,56.3H21.4" stroke="#c8c8c8" stroke-width="1.4"/>
<circle cx="14.7" cy="99.2" r="12.4" fill="#fff" stroke="#2a2a2a" stroke-width="1.4"/>
<path d="M14.5,104.3H7.2V94.4H21.8V99" fill="none" stroke="#4a4a4a" stroke-width="1.4"/>
<path d="M15.9,97.6 L15.9,106.5 L18,104.6 L19.6,107.8 L21,107.2 L19.5,104 L22.4,103.8Z" fill="#fff" stroke="#3a3a3a" stroke-width="1"/>
</svg>
<!--/MAPLABELS-->
</body></html>
